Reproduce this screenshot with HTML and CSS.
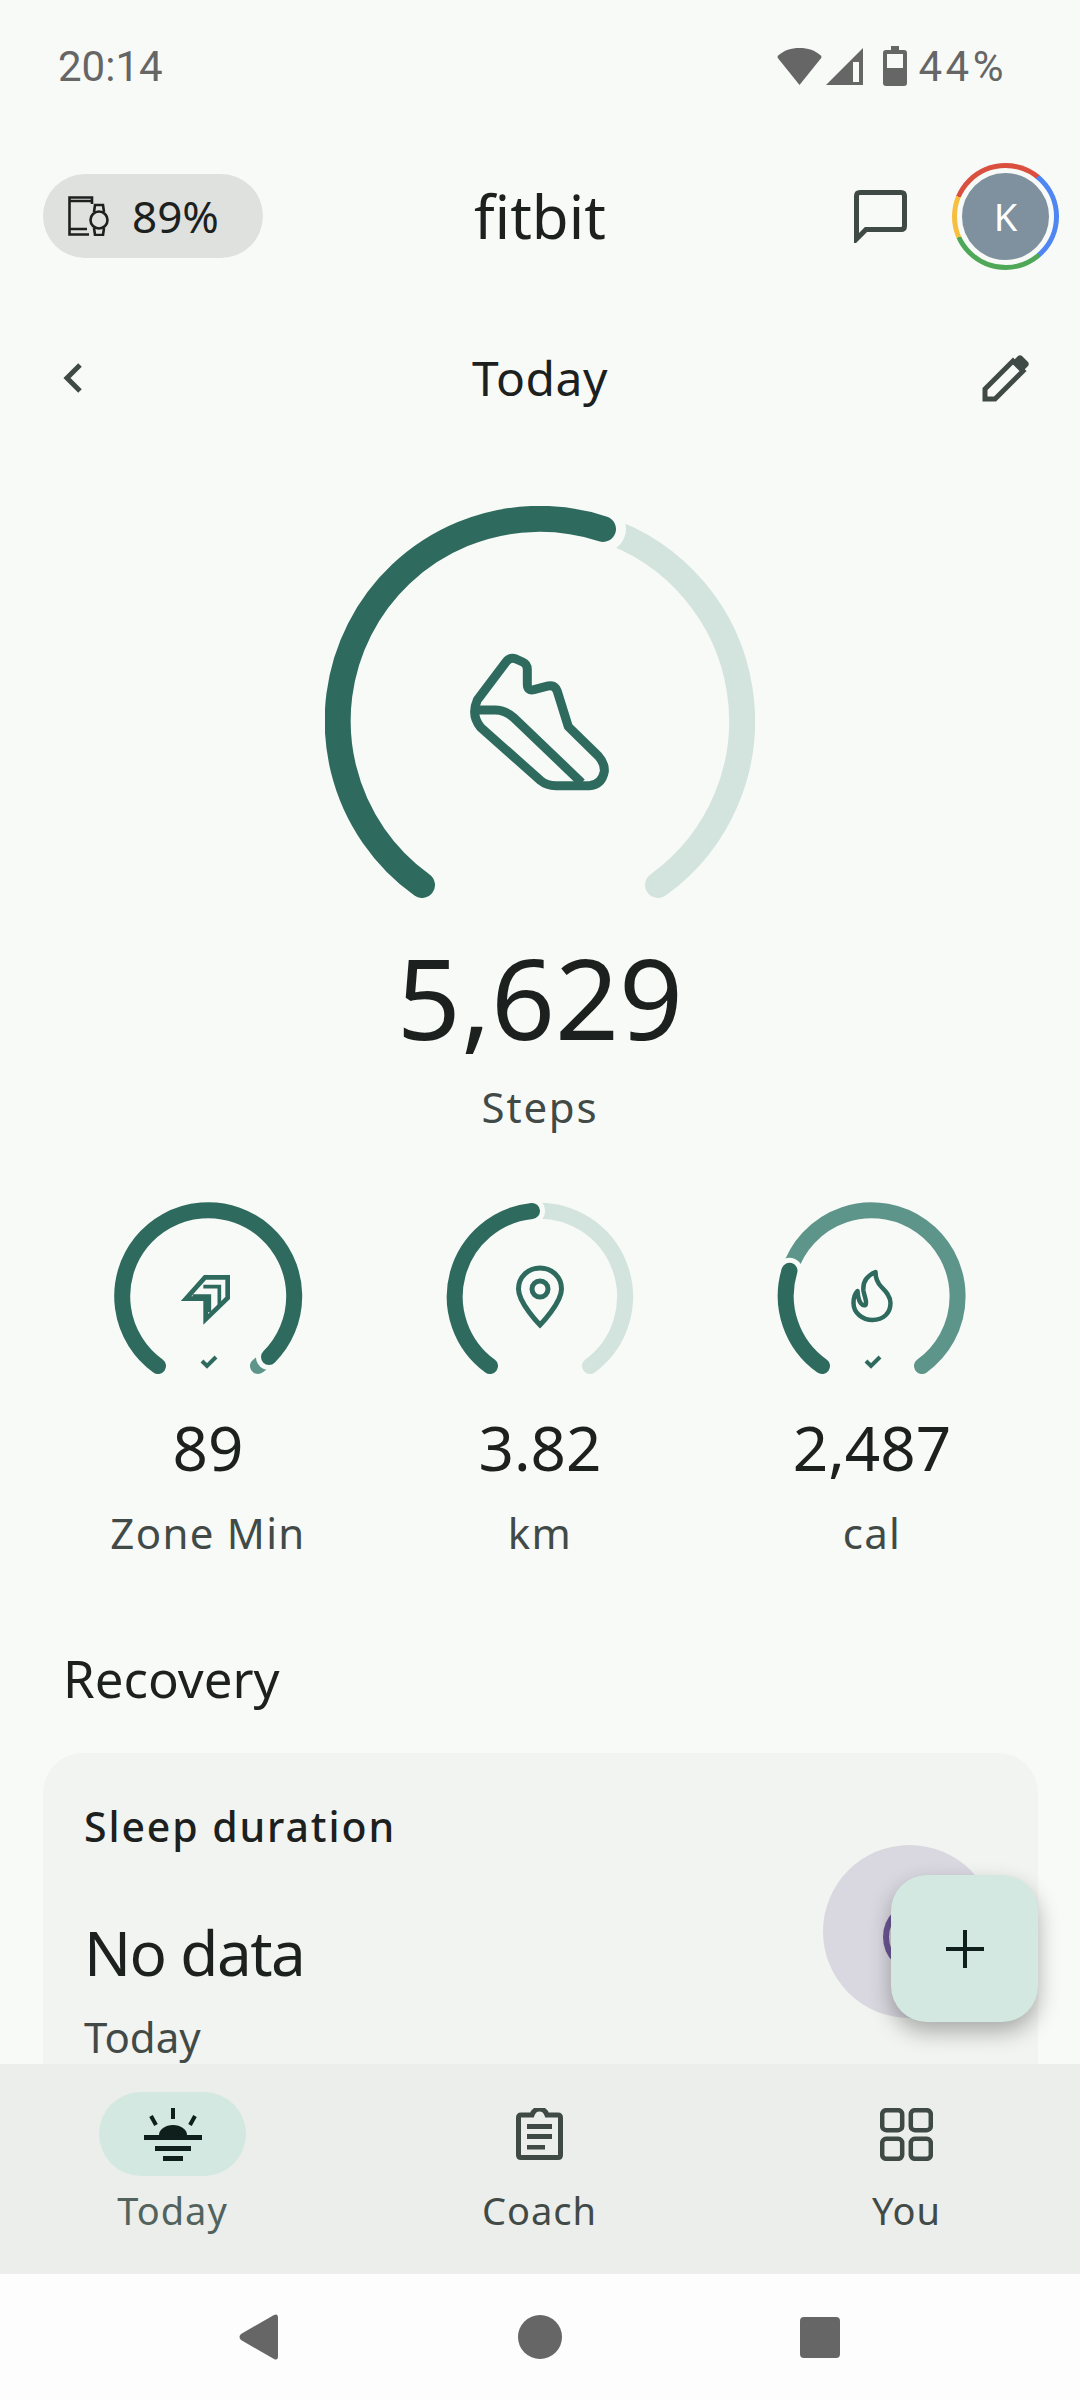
FILE: index.html
```html
<!DOCTYPE html>
<html lang="en">
<head>
    <meta charset="UTF-8">
    <meta name="viewport" content="width=device-width, initial-scale=1.0">
    <title>fitbit - Today</title>
    <link rel="stylesheet" href="styles.css">
</head>
<body>
<div class="screen">
    <div class="status">
        <span class="clock">20:14</span>
        <div class="status-right">
            <svg class="ic-wifi" width="45" height="37" viewBox="0 0 45 37"><path d="M22.5 37 L0.8 10 Q0 8.6 1.2 7.4 C7 2.4 14 0 22.5 0 C31 0 38 2.4 43.8 7.4 Q45 8.6 44.2 10 Z" fill="#666"/></svg>
            <svg class="ic-signal" width="37" height="37" viewBox="0 0 37 37"><path d="M37 0 V37 H0 Z" fill="#666"/><rect x="27" y="14" width="6" height="20" fill="#f8faf7"/></svg>
            <svg class="ic-batt" width="24" height="40" viewBox="0 0 24 40"><path d="M8 0 H16 V4 H21 Q24 4 24 7 V37 Q24 40 21 40 H3 Q0 40 0 37 V7 Q0 4 3 4 H8 Z" fill="#666"/><rect x="4" y="8" width="16" height="14" fill="#f8faf7"/></svg>
            <span class="batt-pct">44%</span>
        </div>
    </div>

    <div class="appbar">
        <div class="device-pill">
            <svg width="42" height="40" viewBox="0 0 42 40" fill="none" stroke="#1c2120" stroke-width="2.6"><path d="M24 8 V1.5 H1.5 V38.5 H21 M1.5 33 H19 M1.5 5 H24"/><circle cx="31" cy="24" r="8.5"/><path d="M26 16 L27 9 H35 L36 16 M26 32 L27 39 H35 L36 32"/></svg>
            <span>89%</span>
        </div>
        <div class="logo">fitbit</div>
        <div class="appbar-right">
            <svg class="ic-chat" width="53" height="53" viewBox="0 0 53 53" fill="none"><path d="M2.5 49 V6 Q2.5 2.5 6 2.5 H47 Q50.5 2.5 50.5 6 V36 Q50.5 39.5 47 39.5 H12 Z" stroke="#3f4946" stroke-width="5"/></svg>
            <div class="avatar-ring"><div class="avatar">K</div></div>
        </div>
    </div>

    <div class="dayrow">
        <svg class="day-back" width="22" height="32" viewBox="0 0 22 32" fill="none"><path d="M18 3 L5 16 L18 29" stroke="#3f4946" stroke-width="5"/></svg>
        <div class="day-title">Today</div>
        <svg class="day-edit" width="48" height="48" viewBox="0 0 48 48" fill="none"><path d="M3 45 V35 L31 7 L41 17 L13 45 Z" stroke="#3f4946" stroke-width="5"/><path d="M31 7 L36 2 Q38 0.5 40 2 L46 8 Q47.5 10 46 12 L41 17 Z" fill="#3f4946"/></svg>
    </div>

    <div class="steps">
        <svg class="steps-gauge" width="430" height="392" viewBox="0 0 430 392" fill="none" stroke-width="26" stroke-linecap="round">
            <path d="M278 23 A202 202 0 0 1 333 379" stroke="#d3e4de"/>
            <circle cx="278" cy="23" r="23" fill="#f8faf7" stroke="none"/>
            <path d="M97 379 A202 202 0 0 1 278 23" stroke="#2e6b5e"/>
            <g transform="translate(-25 -26) scale(0.3333)" stroke="#2e6b5e" stroke-width="27" stroke-linecap="butt" stroke-linejoin="round">
                <path d="M532 660 L618 546 Q630 530 648 537 L668 546 Q682 552 682 568 L682 612 Q682 634 702 629 L745 618 Q765 614 772 634 L805 740 L895 828 Q915 850 913 875 Q905 915 868 917 H768 Q740 917 722 902 L542 742 Q512 705 532 660 Z"/>
                <path d="M528 690 H585 Q615 690 640 712 L845 908"/>
            </g>
        </svg>
        <div class="steps-num">5,629</div>
        <div class="steps-label">Steps</div>
    </div>

    <div class="stats">
        <div class="stat">
            <svg width="190" height="182" viewBox="0 0 190 182" fill="none" stroke-width="16" stroke-linecap="round">
                <path d="M156 156 A86 86 0 0 1 145 165" stroke="#5e958a"/>
                <circle cx="156" cy="156" r="13" fill="#f8faf7" stroke="none"/>
                <path d="M45 165 A86 86 0 1 1 156 156" stroke="#2e6b5e"/>
                <g stroke-width="2.3" stroke="#2e6b5e" stroke-linecap="butt" transform="translate(67 74) scale(0.3333)">
                    <path d="M75 7 H143 V69 L77 133 V71 H18 Z" stroke-width="14"/>
                    <path d="M70 35 H118 V95 M38 63 H88 V112" stroke-width="11"/>
                </g>
                <path d="M89 160 L94 165 L103 156" stroke="#2e6b5e" stroke-width="4" stroke-linecap="butt"/>
            </svg>
            <div class="stat-num">89</div>
            <div class="stat-label">Zone Min</div>
        </div>
        <div class="stat">
            <svg width="190" height="182" viewBox="0 0 190 182" fill="none" stroke-width="16" stroke-linecap="round">
                <path d="M87 10 A86 86 0 0 1 145 165" stroke="#d3e4de"/>
                <circle cx="87" cy="10" r="13" fill="#f8faf7" stroke="none"/>
                <path d="M45 165 A86 86 0 0 1 87 10" stroke="#2e6b5e"/>
                <g stroke-width="5" stroke-linecap="butt" stroke="#2e6b5e">
                    <path d="M95 67 C83 67 73.5 76 73.5 88 C73.5 102 95 124 95 124 C95 124 116.5 102 116.5 88 C116.5 76 107 67 95 67 Z"/>
                    <circle cx="95" cy="88" r="8"/>
                </g>
            </svg>
            <div class="stat-num">3.82</div>
            <div class="stat-label">km</div>
        </div>
        <div class="stat">
            <svg width="190" height="182" viewBox="0 0 190 182" fill="none" stroke-width="16" stroke-linecap="round">
                <path d="M12.5 69.7 A86 86 0 1 1 145 165" stroke="#5e958a"/>
                <circle cx="12.5" cy="69.7" r="13" fill="#f8faf7" stroke="none"/>
                <path d="M45 165 A86 86 0 0 1 12.5 69.7" stroke="#2e6b5e"/>
                <g transform="translate(74.5 68)">
                    <path d="M24 3 C15 7 11 14 12 22 C13 28 16 33 14 36 C11 37 7 35 6 22 C2 26 2 30 2 34 C2 44 11 51 21 51 C32 51 39 44 39 34 C39 27 34 22 30 18 C26 14 24 10 24 3 Z" stroke="#2e6b5e" stroke-width="4.5" stroke-linecap="butt" stroke-linejoin="round"/>
                </g>
                <path d="M89 160 L94 165 L103 156" stroke="#2e6b5e" stroke-width="4" stroke-linecap="butt"/>
            </svg>
            <div class="stat-num">2,487</div>
            <div class="stat-label">cal</div>
        </div>
    </div>

    <h2 class="section-title">Recovery</h2>

    <div class="card">
        <div class="card-title">Sleep duration</div>
        <div class="card-value">No data</div>
        <div class="card-sub">Today</div>
        <div class="sleep-dial"></div>
    </div>

    <button class="fab"><svg width="38" height="38" viewBox="0 0 38 38"><path d="M19 0 V38 M0 19 H38" stroke="#0f1f1b" stroke-width="4"/></svg></button>

    <nav class="tabs">
        <div class="tab">
            <div class="tab-icon active">
                <svg width="58" height="53" viewBox="0 0 58 53" fill="#0f1f1b"><path d="M29 0 V11 M7 8 L12 17 M51 8 L46 17" stroke="#0f1f1b" stroke-width="4"/><path d="M15 27 A14 10 0 0 1 43 27 Z"/><rect y="27" width="58" height="5"/><rect x="11" y="38" width="36" height="5"/><rect x="19" y="48" width="20" height="5"/></svg>
            </div>
            <span class="tab-label selected">Today</span>
        </div>
        <div class="tab">
            <div class="tab-icon">
                <svg width="47" height="52" viewBox="0 0 47 52" fill="none"><path d="M2.5 10 Q2.5 7 5 7 H16 Q18 1 23.5 1 Q29 1 31 7 H42 Q44.5 7 44.5 10 V47 Q44.5 49.5 42 49.5 H5 Q2.5 49.5 2.5 47 Z" stroke="#3f4946" stroke-width="5"/><rect x="11" y="16" width="25" height="5" fill="#3f4946"/><rect x="11" y="26" width="25" height="5" fill="#3f4946"/><rect x="11" y="37" width="18" height="4.5" fill="#3f4946"/></svg>
            </div>
            <span class="tab-label">Coach</span>
        </div>
        <div class="tab">
            <div class="tab-icon">
                <svg width="53" height="53" viewBox="0 0 53 53" fill="none" stroke="#3f4946" stroke-width="4.5"><rect x="2.2" y="2.2" width="20" height="20" rx="4"/><rect x="30.8" y="2.2" width="20" height="20" rx="4"/><rect x="2.2" y="30.8" width="20" height="20" rx="4"/><rect x="30.8" y="30.8" width="20" height="20" rx="4"/></svg>
            </div>
            <span class="tab-label">You</span>
        </div>
    </nav>

    <div class="sysnav">
        <svg width="40" height="46" viewBox="0 0 40 46"><path d="M35 1 Q39 -1 39 4 V42 Q39 47 35 45 L2 26 Q-1 23 2 20 Z" fill="#666"/></svg>
        <div class="sys-home"></div>
        <div class="sys-recent"></div>
    </div>
</div>
</body>
</html>
```

FILE: styles.css
```css
* {
    margin: 0;
    padding: 0;
    box-sizing: border-box;
}
body {
    font-family: 'Noto Sans', sans-serif;
    background: #f8faf7;
    color: #1c2120;
}
.screen {
    position: relative;
    width: 1080px;
    height: 2400px;
    overflow: hidden;
    display: flex;
    flex-direction: column;
}
.status {
    height: 132px;
    flex: none;
    padding: 0 73px 0 58px;
    display: flex;
    align-items: center;
    justify-content: space-between;
    font-family: 'Roboto', sans-serif;
    font-size: 42px;
    color: #666;
}
.status-right {
    display: flex;
    align-items: center;
}
.ic-signal {
    margin-left: 4px;
}
.ic-batt {
    margin-left: 20px;
}
.batt-pct {
    margin-left: 12px;
    letter-spacing: 3.5px;
}
.appbar {
    height: 168px;
    flex: none;
    padding: 0 21px 0 43px;
    display: flex;
    align-items: center;
    justify-content: space-between;
    position: relative;
}
.device-pill {
    width: 220px;
    height: 84px;
    border-radius: 42px;
    background: #dfe1df;
    display: flex;
    align-items: center;
    gap: 22px;
    padding-left: 25px;
    font-size: 44px;
}
.logo {
    position: absolute;
    left: 0;
    right: 0;
    text-align: center;
    font-size: 60px;
    color: #1c2120;
}
.appbar-right {
    display: flex;
    align-items: center;
    gap: 45px;
}
.avatar-ring {
    width: 107px;
    height: 107px;
    border-radius: 50%;
    padding: 5px;
    background: conic-gradient(#db4f3f 0deg 39deg, #4f86f2 39deg 139deg, #4fa858 139deg 246deg, #f6bf3f 246deg 293deg, #db4f3f 293deg 360deg);
}
.avatar {
    width: 97px;
    height: 97px;
    border-radius: 50%;
    border: 5px solid #f8faf7;
    background: #7f919e;
    color: #fff;
    font-size: 38px;
    display: flex;
    align-items: center;
    justify-content: center;
}
.dayrow {
    height: 156px;
    flex: none;
    padding: 0 50px;
    display: grid;
    grid-template-columns: 1fr auto 1fr;
    align-items: center;
}
.day-back {
    margin-left: 12px;
}
.day-edit {
    justify-self: end;
}
.day-title {
    font-size: 48px;
    font-weight: 400;
    letter-spacing: 0.5px;
    margin-bottom: 2px;
}
.steps {
    padding-top: 50px;
    display: flex;
    flex-direction: column;
    align-items: center;
}
.steps-gauge {
    display: block;
}
.steps-num {
    font-size: 112px;
    line-height: 130px;
    margin-top: 34px;
}
.steps-label {
    font-size: 42px;
    line-height: 50px;
    letter-spacing: 1.8px;
    color: #424a47;
    margin-top: 20px;
}
.stats {
    margin-top: 69px;
    padding: 0 42px;
    display: grid;
    grid-template-columns: repeat(3, 1fr);
}
.stat {
    display: flex;
    flex-direction: column;
    align-items: center;
}
.stat-num {
    font-size: 62px;
    line-height: 80px;
    margin-top: 24px;
}
.stat-label {
    font-size: 42px;
    line-height: 50px;
    letter-spacing: 1.3px;
    color: #424a47;
    margin-top: 21px;
}
.section-title {
    font-size: 51px;
    font-weight: 400;
    line-height: 64px;
    margin: 88px 0 0 63px;
}
.card {
    position: relative;
    margin: 43px 42px 0 43px;
    height: 400px;
    flex: none;
    padding: 49px 41px;
    background: #f2f4f1;
    border-radius: 40px;
}
.card-title {
    font-size: 41px;
    font-weight: 500;
    line-height: 48px;
    letter-spacing: 1.9px;
}
.card-value {
    font-size: 62px;
    line-height: 80px;
    letter-spacing: -1.5px;
    margin-top: 62px;
}
.card-sub {
    font-size: 42px;
    line-height: 50px;
    color: #424a47;
    margin-top: 20px;
}
.sleep-dial {
    position: absolute;
    left: 780px;
    top: 92px;
    width: 173px;
    height: 173px;
    border-radius: 50%;
    background: #d9d8e0;
}
.sleep-dial::after {
    content: "";
    position: absolute;
    left: 60px;
    top: 56px;
    width: 60px;
    height: 60px;
    border-radius: 50%;
    border: 6px solid #6b5794;
}
.fab {
    position: absolute;
    left: 891px;
    top: 1875px;
    width: 147px;
    height: 147px;
    border: none;
    border-radius: 36px;
    background: #d2e8e0;
    box-shadow: 0 10px 22px rgba(0, 0, 0, 0.3);
    display: flex;
    align-items: center;
    justify-content: center;
    z-index: 2;
}
.tabs {
    position: absolute;
    left: 0;
    right: 0;
    top: 2064px;
    height: 210px;
    background: #eceeeb;
    padding: 28px 100px 0 99px;
    display: flex;
    justify-content: space-between;
    z-index: 3;
}
.tab {
    width: 147px;
    display: flex;
    flex-direction: column;
    align-items: center;
}
.tab-icon {
    width: 147px;
    height: 84px;
    border-radius: 42px;
    display: flex;
    align-items: center;
    justify-content: center;
}
.tab-icon.active {
    background: #d2e8e0;
}
.tab-label {
    font-size: 38px;
    line-height: 44px;
    letter-spacing: 1px;
    color: #424a47;
    margin-top: 12px;
}
.tab-label.selected {
    color: #52635e;
}
.sysnav {
    position: absolute;
    left: 0;
    right: 0;
    top: 2274px;
    height: 126px;
    background: #fdfdfd;
    padding: 0 240px 0 239px;
    display: flex;
    align-items: center;
    justify-content: space-between;
    z-index: 3;
}
.sys-home {
    width: 44px;
    height: 44px;
    border-radius: 50%;
    background: #666;
}
.sys-recent {
    width: 40px;
    height: 41px;
    border-radius: 4px;
    background: #666;
}
```
